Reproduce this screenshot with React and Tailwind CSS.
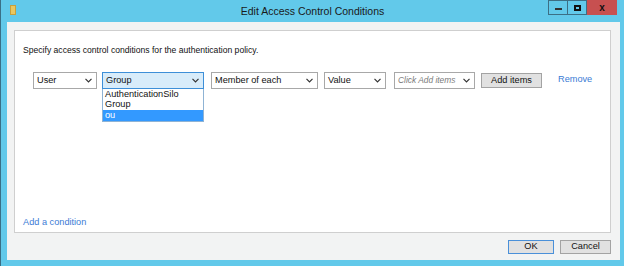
import React from "react";

const Chevron = () => (
  <svg width="7" height="5" viewBox="0 0 7 5" className="shrink-0">
    <polyline points="0.5,0.8 3.5,3.8 6.5,0.8" fill="none" stroke="#333" strokeWidth="1.2" />
  </svg>
);

function Select({ text, w, active, italic }) {
  return (
    <div
      className={`flex items-center justify-between h-[17px] px-[3px] pr-[4px] border ${
        active ? "border-[#3d8fd8] bg-[#d8ecfa]" : "border-[#a8a8a8] bg-white"
      } ${w}`}
    >
      <span
        className={`leading-none ${italic ? "italic text-[8.4px] text-[#7a7a7a]" : "text-[9.2px] text-[#111]"}`}
      >
        {text}
      </span>
      <Chevron />
    </div>
  );
}

export default function App() {
  return (
    <div
      className="w-[624px] h-[266px] bg-[#62c9ea] flex flex-col overflow-hidden border-l border-[#3a6f86]"
      style={{ fontFamily: '"Liberation Sans", Arial, sans-serif' }}
    >
      {/* title bar */}
      <div className="h-[22px] shrink-0 relative flex items-center justify-center">
        <div className="absolute left-[9px] top-[5px] w-[6px] h-[10px] bg-[#e9c760] border border-[#c9a03a]" />
        <span className="text-[10.5px] text-[#1a1a1a] mt-[2px]">Edit Access Control Conditions</span>
        <div className="absolute right-[7px] top-0 flex h-[15px]">
          <div className="w-[20px] h-full border border-[#3c6f85] flex items-center justify-center">
            <div className="w-[7px] h-[2px] bg-[#333] mt-[2px]" />
          </div>
          <div className="w-[19px] h-full border-y border-r border-[#3c6f85] flex items-center justify-center">
            <div className="w-[7px] h-[6px] border-2 border-[#111]" />
          </div>
          <div className="w-[30px] h-full bg-[#c75050] flex items-center justify-center">
            <span className="text-[10px] font-bold text-[#111] leading-none">x</span>
          </div>
        </div>
      </div>

      {/* frame */}
      <div className="flex-1 ml-[6px] mr-[4px] mb-[6px] bg-[#f2f3f3] flex flex-col pt-[8px] pl-[7px] pr-[9px]">
        <div className="h-[203px] bg-white border border-[#cfcfcf] flex flex-col">
          <div className="pl-[8px] pt-[13px] text-[8.6px] text-[#111]">
            Specify access control conditions for the authentication policy.
          </div>
          <div className="flex items-center pl-[18px] mt-[15px]">
            <Select text="User" w="w-[64px]" />
            <div className="relative ml-[5px]">
              <Select text="Group" w="w-[102px]" active />
              <div className="absolute left-0 top-[17px] w-[102px] bg-white border border-[#8fb3d4] border-t-0 flex flex-col text-[9.2px] text-[#111]">
                <div className="h-[10.5px] leading-[10.5px] px-[2px]">AuthenticationSilo</div>
                <div className="h-[10.5px] leading-[10.5px] px-[2px]">Group</div>
                <div className="h-[11px] leading-[11px] px-[2px] bg-[#3399ff] text-white">ou</div>
              </div>
            </div>
            <div className="ml-[7px]">
              <Select text="Member of each" w="w-[107px]" />
            </div>
            <div className="ml-[6px]">
              <Select text="Value" w="w-[62px]" />
            </div>
            <div className="ml-[8px]">
              <Select text="Click Add items" w="w-[81px]" italic />
            </div>
            <div className="ml-[6px] w-[61px] h-[15px] bg-[#e1e1e1] border border-[#a3a3a3] flex items-center justify-center text-[9.2px] text-[#111]">
              Add items
            </div>
            <span className="ml-[16px] text-[9.2px] text-[#3a7bd5]">Remove</span>
          </div>
          <div className="flex-1" />
          <div className="pl-[8px] pb-[2px] text-[9.2px] text-[#3a7bd5]">Add a condition</div>
        </div>
        <div className="flex justify-end gap-[6px] mt-[7px]">
          <div className="w-[46px] h-[14px] bg-[#e1e1e1] border border-[#4a90d9] flex items-center justify-center text-[9.2px] text-[#111]">
            OK
          </div>
          <div className="w-[51px] h-[14px] bg-[#e1e1e1] border border-[#a3a3a3] flex items-center justify-center text-[9.2px] text-[#111]">
            Cancel
          </div>
        </div>
      </div>
    </div>
  );
}
